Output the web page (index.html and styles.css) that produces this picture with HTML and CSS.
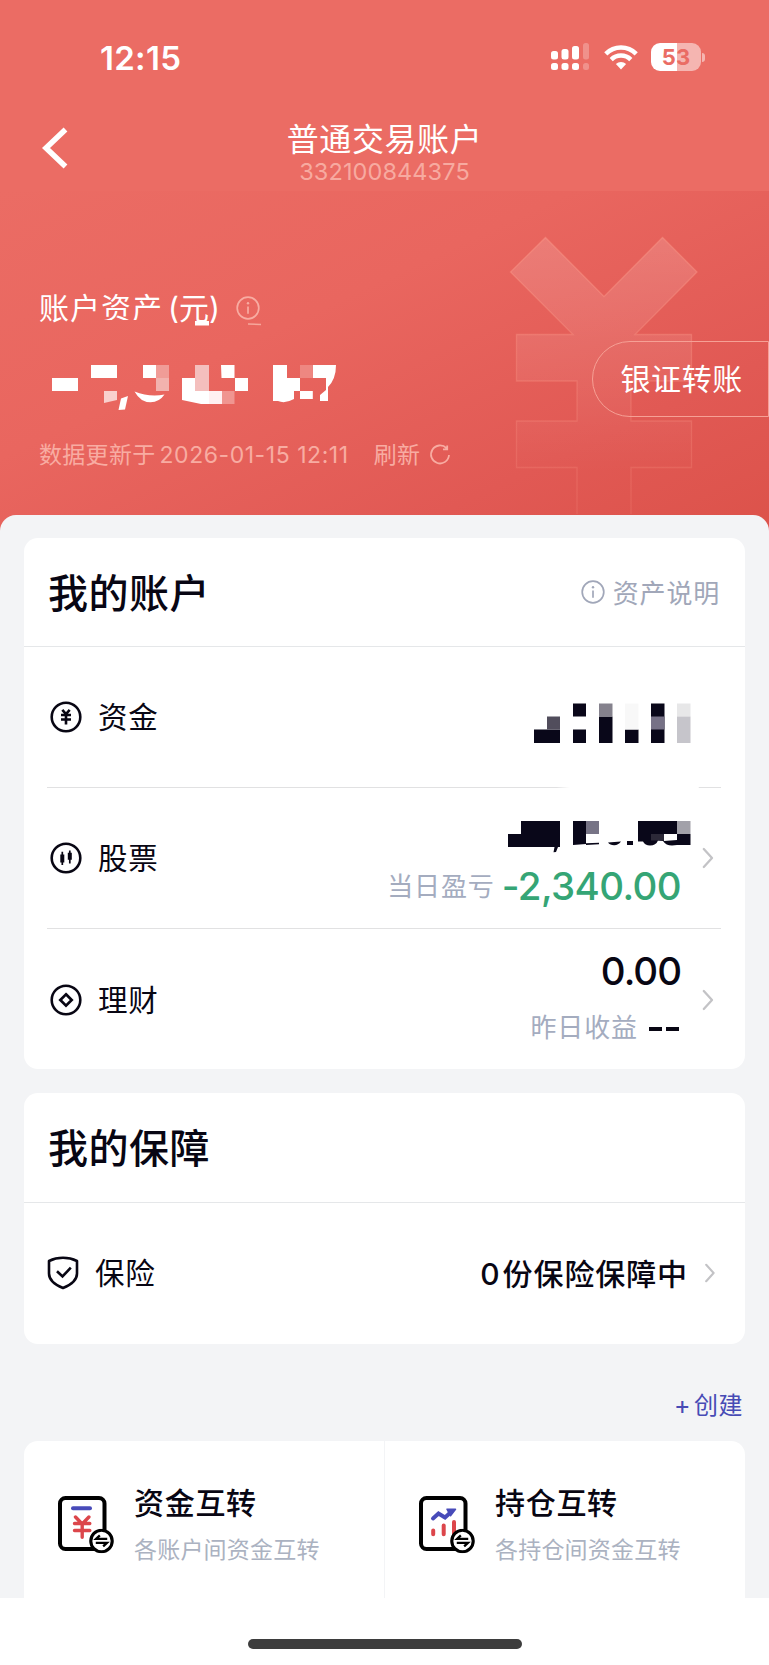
FILE: index.html
```html
<!DOCTYPE html>
<html lang="zh-CN">
<head>
<meta charset="utf-8">
<title>普通交易账户</title>
<link rel="stylesheet" href="styles.css">
</head>
<body>
<svg class="defs" width="0" height="0" aria-hidden="true">
  <symbol id="info" viewBox="0 0 24 24"><circle cx="12" cy="12" r="10.800" fill="none" stroke="currentColor" stroke-width="1.700"/><circle cx="12" cy="7.300" r="1.200" fill="currentColor"/><path d="M12 10.500v7.200" stroke="currentColor" stroke-width="1.700"/></symbol>
  <symbol id="chev" viewBox="0 0 12 22"><path d="M1.800 2 10 11l-8.200 9" fill="none" stroke="#c3c3c6" stroke-width="2.300" stroke-linecap="round" stroke-linejoin="round"/></symbol>
  <symbol id="swap" viewBox="0 0 24 24"><circle cx="12" cy="12" r="10.300" fill="#fff" stroke="#000" stroke-width="3"/><path d="M17.500 10H6.800l3.600-3.400M6.500 13.800h10.700l-3.600 3.400" fill="none" stroke="#000" stroke-width="2.200"/></symbol>
</svg>
<header class="hero">
  <svg class="yen" width="190" height="278" viewBox="509 236 190 278">
    <defs><linearGradient id="yg" x1="0" y1="0" x2="0" y2="1"><stop offset="0" stop-color="#fff" stop-opacity=".16"/><stop offset=".85" stop-color="#fff" stop-opacity="0"/></linearGradient>
    <linearGradient id="ys" x1="0" y1="0" x2="0" y2="1"><stop offset="0" stop-color="#ffa08e" stop-opacity=".4"/><stop offset="1" stop-color="#ffa08e" stop-opacity=".16"/></linearGradient></defs>
    <path d="M545.500 237.500 604 296.500l58.500-59L697 272l-62 62.500h56.500V381H631v40h60.500v46.500H631V516h-54v-48.500h-60.500V421H577v-40h-60.500v-46.500H573L510.500 272z" fill="url(#yg)" stroke="url(#ys)" stroke-width="1.300"/>
  </svg>
  <div class="status">
    <span class="time">12:15</span>
    <svg class="signal" width="39" height="28" viewBox="0 0 39 28" fill="#fff"><rect y="8" width="7" height="8.500" rx="2.500"/><rect x="10.500" y="6" width="7" height="10.500" rx="2.500"/><rect x="21" y="3" width="7" height="13.500" rx="2.500"/><rect y="20" width="7" height="7" rx="2.500"/><rect x="10.500" y="20" width="7" height="7" rx="2.500"/><rect x="21" y="20" width="7" height="7" rx="2.500"/><g opacity=".25"><rect x="32" width="6" height="16.500" rx="2.500"/><rect x="32" y="20" width="6" height="7" rx="2.500"/></g></svg>
    <svg class="wifi" width="34" height="25" viewBox="0 0 34 25"><g fill="none" stroke="#fff" stroke-width="4.500"><path d="M1.800 8.800a21.500 21.500 0 0 1 30.400 0"/><path d="M7.200 14.600a14 14 0 0 1 19.600 0"/></g><path d="M17 24.500 11.900 19a7.300 7.300 0 0 1 10.200 0z" fill="#fff"/></svg>
    <span class="battery">53</span><i class="nub"></i>
  </div>
  <nav class="nav">
    <svg class="back" width="28" height="44" viewBox="0 0 28 44"><path d="M24.500 3.500 5 22l19.500 18.500" fill="none" stroke="#fff" stroke-width="5.500"/></svg>
    <div class="heading"><h1>普通交易账户</h1><p>332100844375</p></div>
  </nav>
  <div class="asset">
    <div class="asset-label"><span>账户</span><span class="cut">资产</span><span class="unit">(元)</span><svg class="info" width="24" height="24"><use href="#info"/></svg></div>
    <svg class="marks" width="340" height="10" viewBox="40 320 340 10"><path d="M195 321h14v4.500h-14z" fill="#fff"/><path d="M248 323.300l13 .5v1.500l-13-.6z" fill="#f6a79c"/></svg>
    <svg class="masked-amount" width="300" height="50" viewBox="40 362 300 50" fill="#fff">
      <path d="M52 378h26v13H52zM91 365h26v13H91z"/><path d="M104 391h13v9l-13 3z" fill="#f9d0cd"/><path d="M121 398.500l7-2.500-3 13.500-6.500.5z"/>
      <path d="M143 365h13v13h-13zM134.500 391.500q15 6 30 3-5 7.500-14 7.800-10 0-16-10.800z"/><path d="M156 365h13v26h-13z" fill="#f2b2ae"/><path d="M156 365h13v13h-13z" fill="#f09c97"/>
      <path d="M182 378h13v13h14v13h-8l-19-4zM221 365h13.500v13H248v13h-13v-13h-13.500z"/><path d="M195 365h14v26h-14z" fill="#f4bfbd"/><path d="M209 391h13v13h-13z" fill="#fff0f1"/><path d="M222 391h12.500v13H222z" fill="#f09590"/>
      <path d="M273 365h14v13h13v13h-6v8q-9 5-16 2h-5zM300 391h12.800v8H300zM312.800 365H336q0 14-8 22v14h-8v-6l6-5v-12h-13.200z"/><path d="M300 365h12.800v13H300z" fill="#ee8781"/>
    </svg>
    <div class="updated"><span>数据更新于</span><span class="date">2026-01-15 12:11</span><span class="refresh">刷新</span>
      <svg width="22" height="22" viewBox="0 0 22 22"><path d="M17.500 4.200A9 9 0 1 0 20 11M18.200 1.500v3.900h-4.200" fill="none" stroke="currentColor" stroke-width="1.800"/></svg></div>
  </div>
  <div class="transfer">银证转账</div>
</header>
<main class="panel">
  <section class="card">
    <div class="card-head"><h2>我的账户</h2><div class="explain"><svg width="24" height="24"><use href="#info"/></svg><span>资产说明</span></div></div>
    <div class="row funds">
      <svg class="ico" width="32" height="32" viewBox="0 0 32 32" fill="none" stroke="#080613"><circle cx="16" cy="16" r="14.300" stroke-width="2.600"/><path d="M12.300 8.800 16 13l3.700-4.200M11 14h10M11 18.500h10M16 13v10.500" stroke-width="2.600"/></svg>
      <span class="name">资金</span>
      <svg class="mosaic" width="157" height="40" viewBox="534 703 157 40" fill="#090719"><path d="M534 729.500h26V743h-26zM573 703.500h13v13h-13zM573 729.500h13V743h-13zM599 716.500h13.500V743H599zM625 729.500h13.500V743H625zM651 703.500h13.500V743H651z"/><path d="M547 716.500h13v13h-13z" fill="#514d5c"/><path d="M599 703.500h13.500v13H599z" fill="#85828d"/><path d="M651 716.500h13.500v13H651z" fill="#767186"/><path d="M625 703.500h13.500v26H625z" fill="#f8f8f8"/><path d="M677 703.500h13.500v13H677z" fill="#e7e7e8"/><path d="M677 716.500h13.500V743H677z" fill="#c6c5cb"/></svg>
    </div>
    <div class="row stock">
      <svg class="ico" width="32" height="32" viewBox="0 0 32 32" fill="none" stroke="#080613"><circle cx="16" cy="16" r="14.300" stroke-width="2.600"/><path d="M12.300 9.800V23M19.800 8.500v13" stroke-width="1.700"/><path d="M12.300 12.500v8M19.800 10.800v7" stroke-width="4"/></svg>
      <span class="name">股票</span>
      <div class="values">
        <svg class="mosaic2" width="183" height="32" viewBox="508 821 183 32" fill="#090719"><path d="M521 821h39v26h-2l-2 5-2.500.3 1-5.300H508v-13h13zM573 821h13v23l-13 1zM638 821h39v13h13.500v11H677l-5 .5q-6 0-9-4.500l-5-.5q-2 5-8 5-5 0-7-4h-5z"/><path d="M586 821h13v13h-13z" fill="#777486"/><path d="M677 821h13.500v13H677z" fill="#a2a1a9"/><path d="M651 834h13v6.500h-13z" fill="#2c2938"/><path d="M664 834h13v6l-13 1z" fill="#fff"/><path d="M586 843.300l13-.5v1.500l-13 .7zM608 842.500l13-1q-3 4-7 3.800-4 0-6-2.800zM627 841h6v4h-6z"/></svg>
        <div class="sub"><span>当日盈亏</span><b class="green">-2,340.00</b></div>
      </div>
      <svg class="chev" width="12" height="22"><use href="#chev"/></svg>
    </div>
    <div class="row wealth">
      <svg class="ico" width="32" height="32" viewBox="0 0 32 32" fill="none" stroke="#080613"><circle cx="16" cy="16" r="14.300" stroke-width="2.600"/><path d="m16 10.300 5.700 5.700-5.700 5.700-5.700-5.700z" stroke-width="2.700"/></svg>
      <span class="name">理财</span>
      <div class="values"><b class="zero">0.00</b><div class="sub"><span>昨日收益</span><i class="dash"></i><i class="dash two"></i></div></div>
      <svg class="chev" width="12" height="22"><use href="#chev"/></svg>
    </div>
  </section>
  <section class="card cover">
    <div class="card-head"><h2>我的保障</h2></div>
    <div class="row insure">
      <svg class="shield" width="32" height="34" viewBox="0 0 32 34" fill="none" stroke="#080613" stroke-width="2.600" stroke-linejoin="round"><path d="M16 1.800q7.500 0 14 3.200v12.500Q30 26.500 16 32 2 26.500 2 17.500V5Q8.500 1.800 16 1.800z"/><path d="m10 15.200 5.500 5.300 8.300-8.800" stroke-linejoin="miter"/></svg>
      <span class="name">保险</span><span class="count"><em>0</em>份保险保障中</span>
      <svg class="chev" width="12" height="20"><use href="#chev"/></svg>
    </div>
  </section>
  <div class="create"><span class="plus">+</span><span class="create-text">创建</span></div>
  <section class="tiles">
    <div class="tile">
      <svg width="58" height="60" viewBox="0 0 58 60" fill="none"><rect x="3" y="3" width="44.500" height="51" rx="5.500" stroke="#000" stroke-width="4"/><path d="M16 13.200h17" stroke="#484bb9" stroke-width="4" stroke-linecap="round"/><path d="m18.500 22 6.700 7 6.700-7M17.500 28.500h15.300M17.500 35.500h15.300M25.200 29v13.200" stroke="#dc464b" stroke-width="3.400" stroke-linecap="round"/><svg x="32" y="33.500" width="25" height="25"><use href="#swap"/></svg></svg>
      <div class="tile-text"><h3>资金互转</h3><p>各账户间资金互转</p></div>
    </div>
    <div class="tile">
      <svg width="58" height="60" viewBox="0 0 58 60" fill="none"><rect x="3" y="3" width="44.500" height="51" rx="5.500" stroke="#000" stroke-width="4"/><path d="m15 23.500 5.500-5 6.500 4 6-5.500" stroke="#484bb9" stroke-width="4" stroke-linecap="round"/><path d="M29 14.200h8.500l-5 6.500z" fill="#484bb9" stroke="#484bb9" stroke-width="1.500" stroke-linejoin="round"/><path d="M15.200 35.500v3.800M25.700 30.500v8.800M36 27v12" stroke="#dc464b" stroke-width="4" stroke-linecap="round"/><svg x="32" y="33.500" width="25" height="25"><use href="#swap"/></svg></svg>
      <div class="tile-text"><h3>持仓互转</h3><p>各持仓间资金互转</p></div>
    </div>
  </section>
</main>
<footer class="home"><i></i></footer>
</body>
</html>
```

FILE: styles.css
```css
* { box-sizing: border-box; margin: 0; padding: 0; }
body { width: 769px; height: 1665px; overflow: hidden; background: #fff; color: #080613; font-family: Inter, "Noto Sans CJK SC", sans-serif; }
svg { display: block; flex: none; }
span, h1, h2, h3, p { white-space: nowrap; }
i, em { font-style: normal; }
.defs { position: absolute; }

.hero { position: relative; height: 535px; color: #fff; background: linear-gradient(#eb6c64, #eb6c64) 0 0 / 100% 191px no-repeat, linear-gradient(155deg, #eb6c64 0%, #e9665f 38%, #e15954 75%, #dc524a 100%) 0 191px / 100% 344px no-repeat; }
.yen { position: absolute; left: 509px; top: 236px; }
.status { display: flex; height: 114px; padding: 43px 0 0 100px; align-items: flex-start; }
.time { width: 451px; padding-top: 1px; font-size: 33px; font-weight: 600; line-height: 29px; letter-spacing: .3px; }
.signal { margin-right: 14px; }
.wifi { margin: 2px 13px 0 0; }
.battery { width: 50px; height: 28px; border-radius: 9px; background: linear-gradient(90deg, #fff 53%, #f5b5b1 53%); color: #ea6c64; font-size: 22px; font-weight: 700; line-height: 28px; text-align: center; }
.nub { width: 3px; height: 9px; margin: 10px 0 0 1px; border-radius: 0 4px 4px 0; background: #f5b5b1; }
.nav { display: flex; height: 77px; padding-left: 41px; }
.back { margin-top: 12px; }
.heading { width: 631px; text-align: center; }
h1 { padding-top: 3px; font-size: 32px; font-weight: 400; line-height: 46px; letter-spacing: .6px; }
.heading p { margin-top: -4px; color: #f7aaa0; font-size: 23.500px; line-height: 26px; letter-spacing: .1px; }
.asset { padding: 97px 0 0 39px; }
.asset-label { display: flex; align-items: center; height: 40px; font-size: 30px; letter-spacing: 1px; line-height: 40px; }
.cut { clip-path: inset(0 0 8px 0); }
.unit { margin-left: 5px; letter-spacing: 0; }
.info { margin-left: 16px; color: #f8aca2; }
.marks { margin: -8px 0 32px 1px; }
.masked-amount { margin-left: 1px; }
.updated { display: flex; align-items: center; height: 30px; margin-top: 28px; color: #f8aca2; font-size: 23px; line-height: 30px; letter-spacing: .3px; }
.date { margin-left: 4px; letter-spacing: .55px; }
.refresh { margin: 0 9px 0 25px; }
.transfer { position: absolute; left: 591.500px; top: 341px; width: 177px; height: 76px; padding-left: 28px; border: 1.500px solid #f6a095; border-radius: 38px 0 0 38px; font-size: 30px; line-height: 74px; letter-spacing: .6px; }

.panel { position: relative; height: 1083px; margin-top: -20px; padding: 23px 24px 0; border-radius: 16px 16px 0 0; background: #f3f4f6; }
.card { height: 531px; border-radius: 14px; background: #fff; }
.card-head { display: flex; align-items: center; justify-content: space-between; height: 109px; padding: 0 25px 0 24px; border-bottom: 1px solid #e5e7e9; }
h2 { margin-top: -2px; font-size: 40px; font-weight: 500; letter-spacing: .5px; }
.explain { display: flex; align-items: center; gap: 8px; color: #a1a7b9; font-size: 26px; letter-spacing: .8px; }
.explain span { margin-top: -2px; }
.row { display: flex; align-items: center; height: 141px; margin: 0 24px 0 23px; padding-left: 3px; border-bottom: 1px solid #e1e1e2; }
.row:last-child { border: 0; }
.name { margin: -4px 0 0 16px; font-size: 29.500px; letter-spacing: .7px; }
.mosaic { margin: 12px 30px 0 auto; }
.funds { border-image: linear-gradient(90deg, #e1e1e2 75.500%, #fff 77.500%, #fff 96.500%, #e1e1e2 96.600%) 1; }
.values { display: flex; flex-direction: column; align-items: flex-end; margin-left: auto; }
.sub { display: flex; align-items: center; color: #a4acbf; font-size: 26px; letter-spacing: .9px; }
.mosaic2 { margin-right: -10px; }
.green { margin: 2px 0 0 7px; color: #35a575; font-size: 38.500px; font-weight: 500; line-height: 48px; letter-spacing: -.6px; }
.stock .values { padding-top: 20px; }
.stock .sub { height: 62px; margin-top: 1px; }
.chev { margin: 0 7px 0 21px; }
.zero { font-size: 38.500px; font-weight: 500; line-height: 48px; letter-spacing: -1px; }
.wealth .sub { height: 60px; margin: 1px 2px 0 0; }
.wealth .values { padding-top: 3px; }
.dash { width: 13px; height: 4px; margin: 6px 0 0 11px; background: #080613; }
.dash.two { margin-left: 4px; }
.cover { height: 251.500px; margin-top: 23.500px; }
.cover .card-head { height: 110.500px; }
.insure { height: 140px; padding-left: 0; }
.insure .name { margin-left: 16px; }
.count { margin: -3px 0 0 auto; font-size: 30px; font-weight: 500; letter-spacing: .9px; }
.count em { margin-right: 3px; letter-spacing: 0; }
.insure .chev { margin: 0 5px 0 16px; }
.create { display: flex; align-items: center; justify-content: flex-end; height: 97px; padding: 24px 2px 0 0; color: #474bb5; font-size: 24px; letter-spacing: .5px; }
.plus { margin: 0 3px 0 0; font-size: 25px; }
.create-text { margin-top: -2px; }
.tiles { display: flex; gap: 1px; height: 157px; }
.tile { display: flex; flex: 1; padding: 54px 0 0 33px; background: #fff; border-radius: 14px 0 0; }
.tile + .tile { border-radius: 0 14px 0 0; }
.tile-text { margin: -15px 0 0 19px; }
h3 { font-size: 30px; font-weight: 500; line-height: 46px; letter-spacing: .7px; }
.tile p { margin-top: 3px; color: #abb2c1; font-size: 23px; line-height: 42px; letter-spacing: .2px; }
.home { display: flex; height: 67px; padding: 41px 0 0 247.500px; }
.home i { width: 274px; height: 10px; border-radius: 5px; background: #3d3d3d; }
```
